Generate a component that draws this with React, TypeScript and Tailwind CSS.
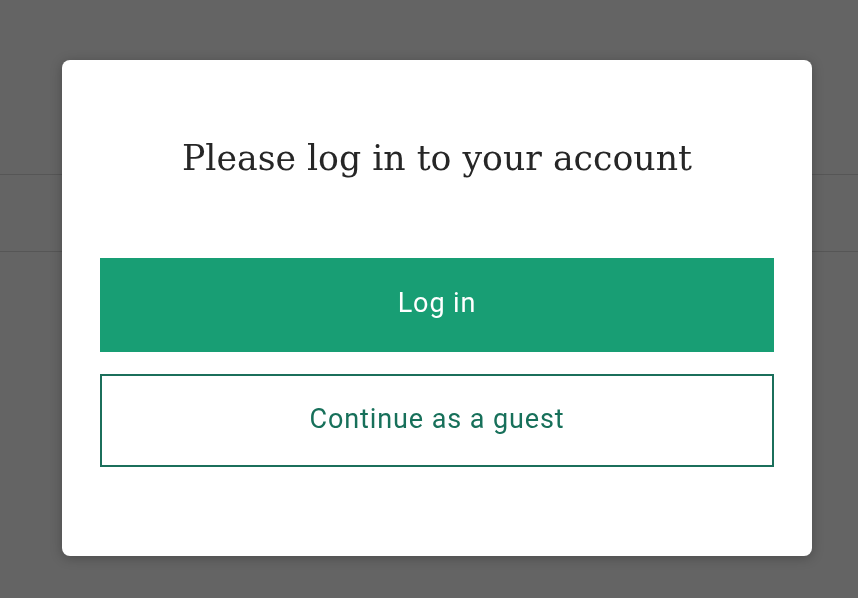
import React from 'react';

export default function App() {
  return (
    <div className="relative h-[598px] w-[858px] overflow-hidden bg-[#646464]">
      {/* page behind the overlay */}
      <div className="h-[175px] border-b border-[#565656]" />
      <div className="h-[77px] border-b border-[#565656]" />

      <div className="fixed inset-0 flex items-start justify-center pt-[60px]">
        <div className="ml-[16px] flex h-[496px] w-[750px] flex-col items-center rounded-lg bg-white px-[38px] pt-[73px] shadow-[0_2px_12px_rgba(0,0,0,0.25)]">
          <h1 className="font-['DejaVu_Serif',serif] text-[34.7px] leading-[50px] text-[#262626]">
            Please log in to your account
          </h1>
          <button className="mt-[75px] h-[94px] w-full bg-[#189e74] pb-[3px] font-['Roboto',sans-serif] text-[27px] tracking-[0.9px] text-white">
            Log in
          </button>
          <button className="mt-[22px] h-[93px] w-full border-2 border-[#1b6f5b] bg-white pb-[3px] font-['Roboto',sans-serif] text-[27px] tracking-[0.9px] text-[#17705a]">
            Continue as a guest
          </button>
        </div>
      </div>
    </div>
  );
}
